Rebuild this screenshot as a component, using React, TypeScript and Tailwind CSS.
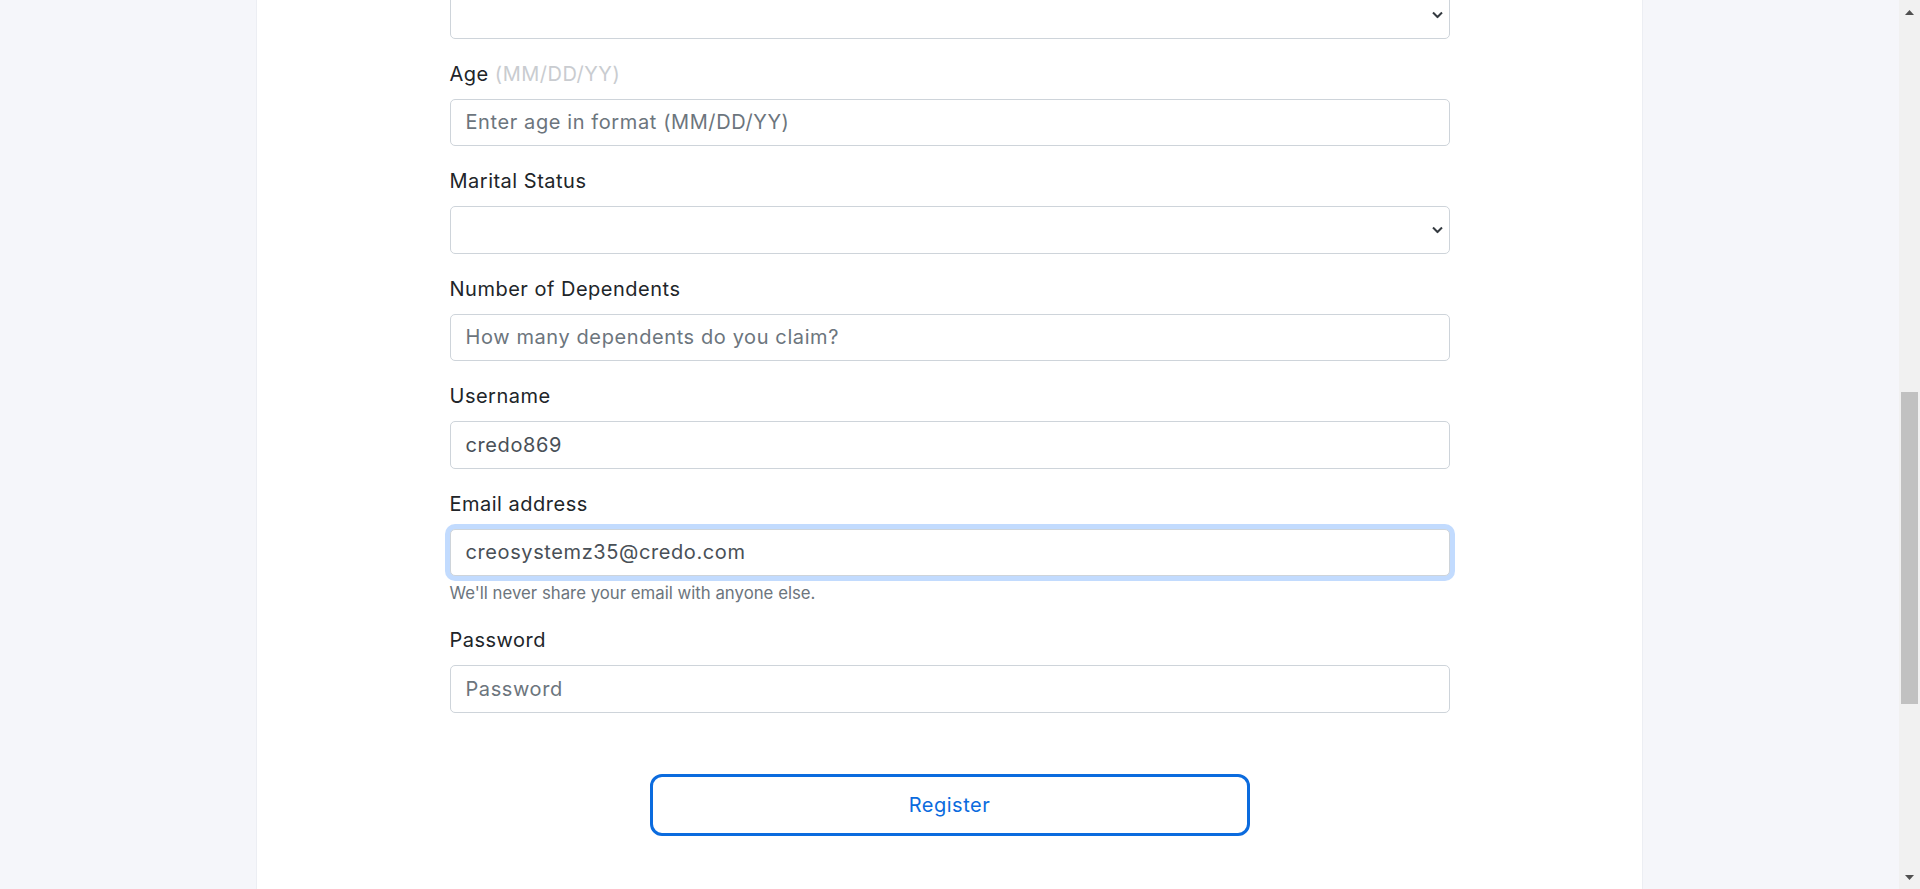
import React, { useEffect, useRef } from 'react';

const Chevron = () => (
  <svg
    className="pointer-events-none absolute right-[7px] top-1/2 -translate-y-1/2"
    width="11"
    height="7"
    viewBox="0 0 11 7"
    fill="none"
  >
    <path d="M1 1l4.5 4.5L10 1" stroke="#343a40" strokeWidth="2" />
  </svg>
);

const inputCls =
  'block w-full h-[47.5px] px-[15px] rounded-[5px] border border-[#ced4da] bg-white text-[20px] tracking-[0.6px] text-[#495057] placeholder:text-[#6c757d] outline-none';

const Field = ({ label, hint, children }: { label: React.ReactNode; hint?: string; children: React.ReactNode }) => (
  <div className="mb-[20px]">
    <label className="block mb-[10px] text-[20px] leading-[30px] tracking-[0.5px] text-[#212529]">{label}</label>
    {children}
    {hint && <div className="mt-[5px] text-[16.8px] leading-[24px] text-[#6c757d]">{hint}</div>}
  </div>
);

const Select = () => (
  <div className="relative">
    <select className={`${inputCls} appearance-none`} defaultValue="">
      <option value=""></option>
    </select>
    <Chevron />
  </div>
);

const Scrollbar = () => (
  <div className="w-[21px] shrink-0 bg-[#f1f1f1] flex flex-col">
    <div className="h-[24px] flex items-center justify-center">
      <svg width="9" height="5" viewBox="0 0 9 5">
        <path d="M4.5 0L9 5H0z" fill="#505050" />
      </svg>
    </div>
    <div className="flex-1 pt-[368px] pl-[2px] pr-[2px]">
      <div className="h-[312px] bg-[#c1c1c1]" />
    </div>
    <div className="h-[24px] flex items-center justify-center">
      <svg width="9" height="5" viewBox="0 0 9 5">
        <path d="M0 0h9L4.5 5z" fill="#505050" />
      </svg>
    </div>
  </div>
);

const App = () => {
  const emailRef = useRef<HTMLInputElement>(null);

  useEffect(() => {
    const el = emailRef.current;
    if (el) {
      el.focus({ preventScroll: true });
      try {
        el.setSelectionRange(el.value.length, el.value.length);
      } catch {
        // ignore
      }
    }
  }, []);

  return (
    <div className="h-screen overflow-hidden flex bg-[#f5f6fa] font-['Inter',sans-serif]">
      <div className="flex-1 flex justify-center">
        <div className="w-[1387px] bg-white border-x border-[#eceef3] flex justify-center">
          <form className="w-[1000px] -mt-[9px]">
            <div className="mb-[20px]">
              <Select />
            </div>

            <Field
              label={
                <>
                  Age <span className="text-[#c9ccd0]">(MM/DD/YY)</span>
                </>
              }
            >
              <input className={inputCls} placeholder="Enter age in format (MM/DD/YY)" />
            </Field>

            <Field label="Marital Status">
              <Select />
            </Field>

            <Field label="Number of Dependents">
              <input className={inputCls} placeholder="How many dependents do you claim?" />
            </Field>

            <Field label="Username">
              <input className={inputCls} defaultValue="credo869" />
            </Field>

            <Field label="Email address" hint="We'll never share your email with anyone else.">
              <input
                ref={emailRef}
                type="text"
                className={`${inputCls} border-[#86b7fe] shadow-[0_0_0_5px_rgba(13,110,253,0.25)] caret-[#212529]`}
                defaultValue="creosystemz35@credo.com"
              />
            </Field>

            <Field label="Password">
              <input type="password" className={inputCls} placeholder="Password" />
            </Field>

            <div className="flex justify-center pt-[41px]">
              <button
                type="button"
                className="w-[600px] h-[62px] rounded-[12px] border-[3px] border-[#0b6bde] bg-white text-[20px] tracking-[0.5px] text-[#0b6bde]"
              >
                Register
              </button>
            </div>
          </form>
        </div>
      </div>
      <Scrollbar />
    </div>
  );
};

export default App;
